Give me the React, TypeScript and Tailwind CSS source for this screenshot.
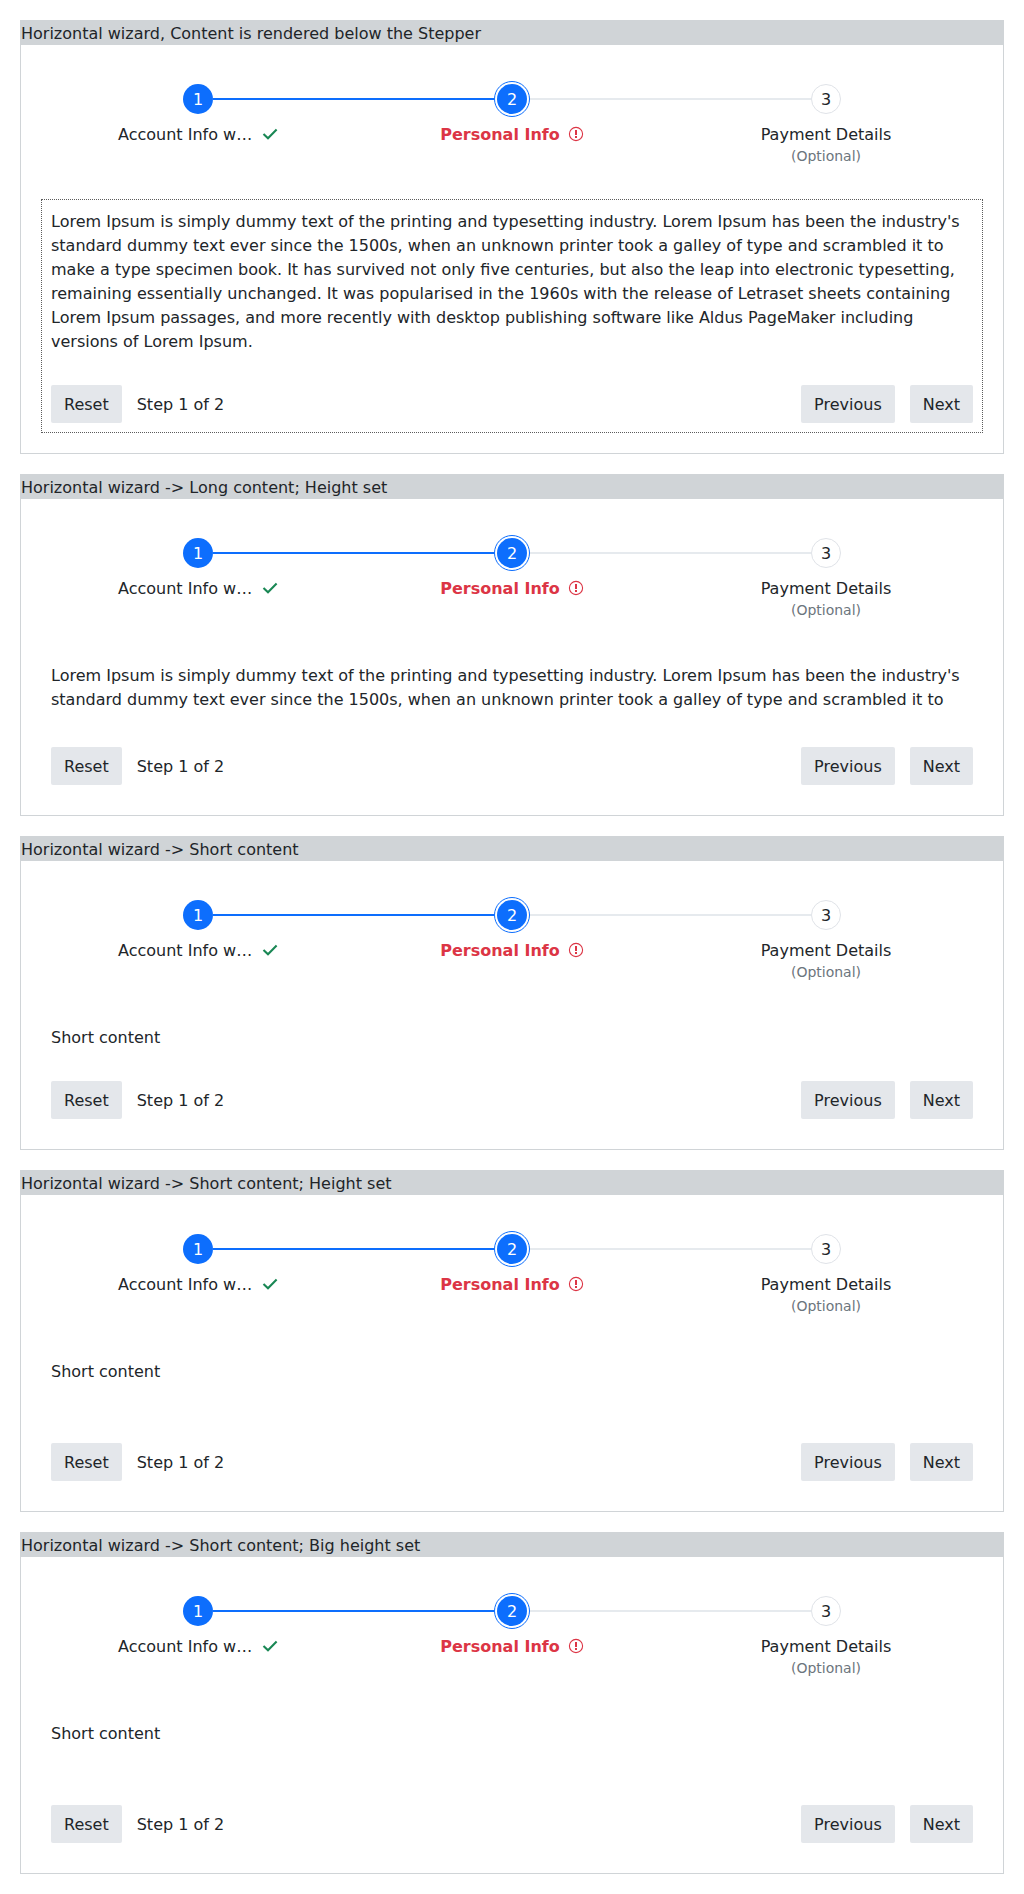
import React from "react";

const INTRO =
  "Lorem Ipsum is simply dummy text of the printing and typesetting industry. Lorem Ipsum has been the industry's standard dummy text ever since the 1500s, when an unknown printer took a galley of type and scrambled it to";

const LOREM =
  INTRO +
  " make a type specimen book. It has survived not only five centuries, but also the leap into electronic typesetting, remaining essentially unchanged. It was popularised in the 1960s with the release of Letraset sheets containing Lorem Ipsum passages, and more recently with desktop publishing software like Aldus PageMaker including versions of Lorem Ipsum.";

function CheckIcon() {
  return (
    <svg className="-mt-0.5 size-4 shrink-0" viewBox="0 0 16 16" fill="none" stroke="#198754" strokeWidth="2.1">
      <path d="M1.5 7.9 6 12.2 14.6 3.6" />
    </svg>
  );
}

function ErrorIcon() {
  return (
    <svg className="-mt-0.5 size-4 shrink-0" viewBox="0 0 16 16" fill="none">
      <circle cx="8" cy="8" r="6.6" stroke="#dc3545" strokeWidth="1.1" />
      <path d="M7 4h2v5H7zM7 10h2v2H7z" fill="#dc3545" />
    </svg>
  );
}

function Stepper() {
  return (
    <div className="grid h-[134px] grid-cols-3">
      <div className="flex flex-col items-center">
        <div className="flex h-9 w-full items-center">
          <div className="flex-1" />
          <div className="flex size-[30px] items-center justify-center rounded-full bg-[#0d6efd] pt-0.5 text-white">1</div>
          <div className="h-0.5 flex-1 bg-[#0d6efd]" />
        </div>
        <div className="mt-1.5 flex items-center gap-2">
          <span className="w-[136px] whitespace-nowrap">Account Info w…</span>
          <CheckIcon />
        </div>
      </div>
      <div className="flex flex-col items-center">
        <div className="flex h-9 w-full items-center">
          <div className="h-0.5 flex-1 bg-[#0d6efd]" />
          <div className="flex size-9 items-center justify-center rounded-full border border-[#0d6efd]">
            <div className="flex size-[30px] items-center justify-center rounded-full bg-[#0d6efd] pt-0.5 text-white">2</div>
          </div>
          <div className="h-0.5 flex-1 bg-[#e6eaee]" />
        </div>
        <div className="mt-1.5 flex items-center gap-2 font-bold text-[#dc3545]">
          <span>Personal Info</span>
          <ErrorIcon />
        </div>
      </div>
      <div className="flex flex-col items-center">
        <div className="flex h-9 w-full items-center">
          <div className="h-0.5 flex-1 bg-[#e6eaee]" />
          <div className="flex size-[30px] items-center justify-center rounded-full border border-[#e0e3e8] pt-0.5">3</div>
          <div className="flex-1" />
        </div>
        <div className="mt-1.5">Payment Details</div>
        <div className="-mt-px text-sm leading-[21px] text-[#6c757d]">(Optional)</div>
      </div>
    </div>
  );
}

function Button({ children }: { children: React.ReactNode }) {
  return <button className="h-[38px] rounded-xs bg-[#e4e7eb] px-[13px] pt-0.5">{children}</button>;
}

type WizardProps = {
  title: string;
  text: string;
  fixedHeight?: boolean;
  focused?: boolean;
};

function Wizard({ title, text, fixedHeight, focused }: WizardProps) {
  return (
    <section className="border border-[#d0d4d7]">
      <h2 className="h-6 bg-[#d0d4d7] leading-[26px]">{title}</h2>
      <div className="px-5 pt-9 pb-5">
        <Stepper />
        <div className={`mt-[-16px] border px-[9px] pt-2.5 pb-[9px] ${focused ? "border-dotted border-[#5c5c5c]" : "border-transparent"}`}>
          <div className={fixedHeight ? "h-[52px]" : ""}>{text}</div>
          <div className="mt-[31px] flex items-center">
            <Button>Reset</Button>
            <span className="ml-[15px] flex-1 pt-0.5">Step 1 of 2</span>
            <div className="flex gap-[15px]">
              <Button>Previous</Button>
              <Button>Next</Button>
            </div>
          </div>
        </div>
      </div>
    </section>
  );
}

export default function App() {
  return (
    <main className="flex flex-col gap-5 bg-white p-5 font-['DejaVu_Sans',sans-serif] text-base leading-6 text-[#212529]">
      <Wizard title="Horizontal wizard, Content is rendered below the Stepper" text={LOREM} focused />
      <Wizard title="Horizontal wizard -> Long content; Height set" text={INTRO} fixedHeight />
      <Wizard title="Horizontal wizard -> Short content" text="Short content" />
      <Wizard title="Horizontal wizard -> Short content; Height set" text="Short content" fixedHeight />
      <Wizard title="Horizontal wizard -> Short content; Big height set" text="Short content" fixedHeight />
    </main>
  );
}
